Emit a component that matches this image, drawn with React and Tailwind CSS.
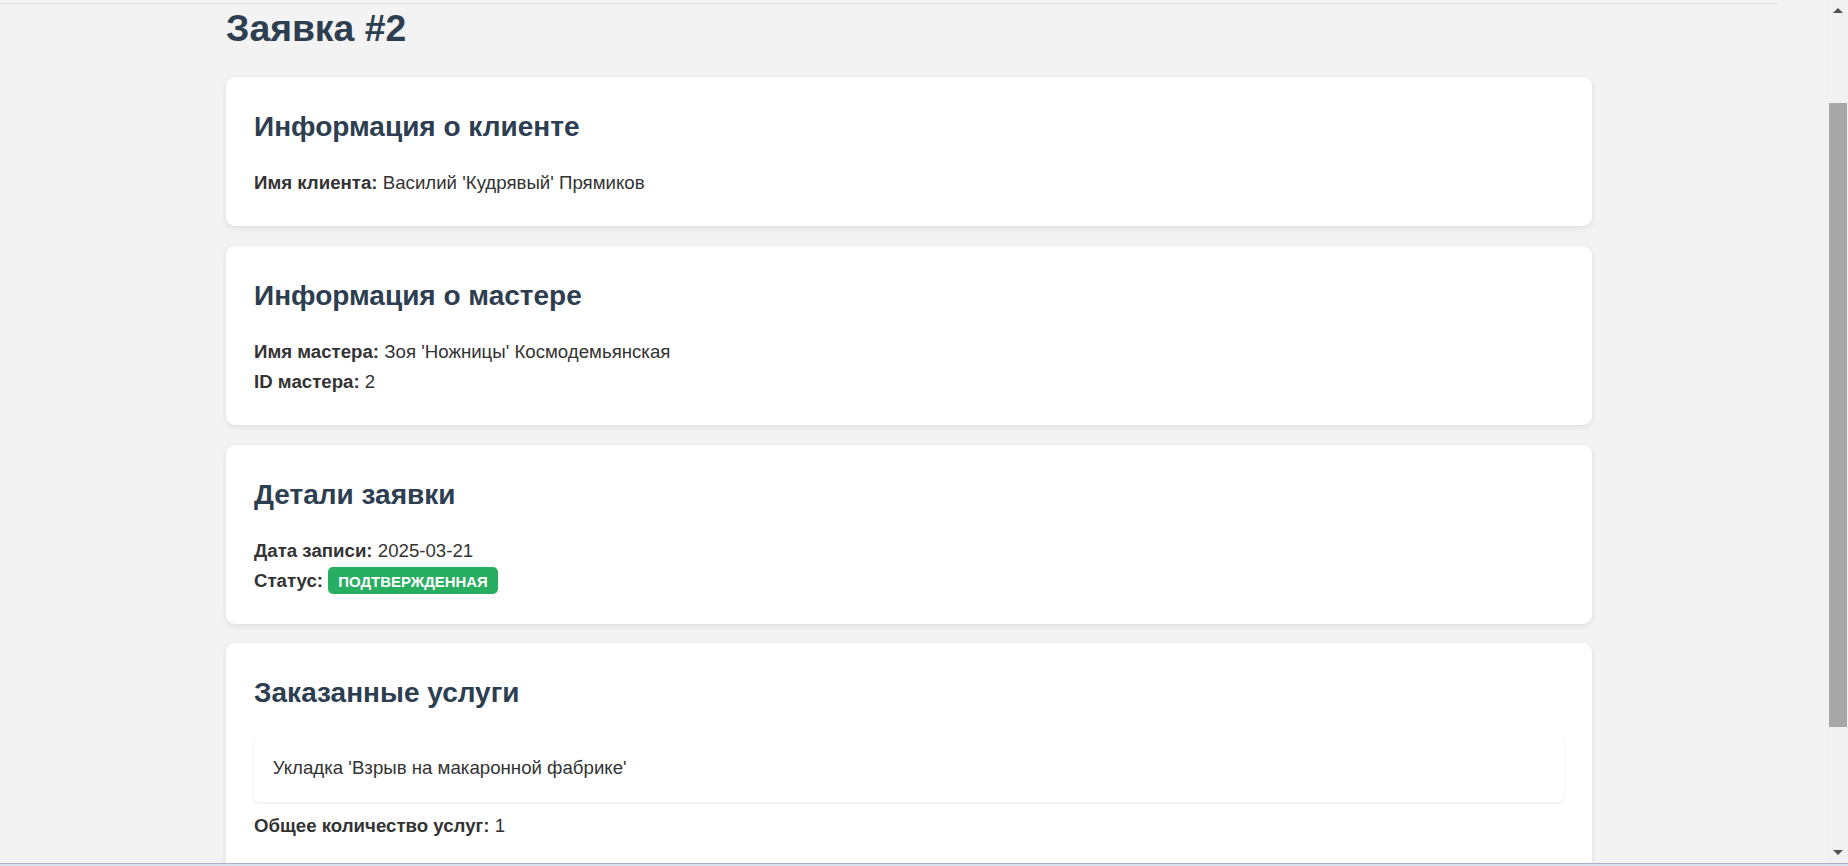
import React from 'react'

const cards = [
  {
    title: 'Информация о клиенте',
    rows: [{ label: 'Имя клиента:', value: "Василий 'Кудрявый' Прямиков" }],
  },
  {
    title: 'Информация о мастере',
    rows: [
      { label: 'Имя мастера:', value: "Зоя 'Ножницы' Космодемьянская" },
      { label: 'ID мастера:', value: '2' },
    ],
  },
]

function Card({ title, children }) {
  return (
    <div className="rounded-[9px] bg-white p-[28px] shadow-[0_2px_6px_rgba(0,0,0,0.09)]">
      <h2 className="mb-[18.67px] text-[28px] font-bold leading-[44.8px] text-[#2c3e50]">{title}</h2>
      {children}
    </div>
  )
}

function Row({ label, children }) {
  return (
    <p className="text-[18.67px] leading-[30px] text-[#333]">
      <strong className="font-bold">{label}</strong> {children}
    </p>
  )
}

function Scrollbar() {
  return (
    <div className="flex w-[21px] shrink-0 flex-col bg-[#f1f1f1]">
      <div className="flex h-[21px] items-center justify-center">
        <div className="h-0 w-0 border-x-[5px] border-b-[5px] border-x-transparent border-b-[#505050]" />
      </div>
      <div className="ml-[2px] mr-[1px] mt-[82px] h-[624px] bg-[#a8a8a8]" />
      <div className="flex-1" />
      <div className="flex h-[21px] items-center justify-center">
        <div className="h-0 w-0 border-x-[5px] border-t-[5px] border-x-transparent border-t-[#505050]" />
      </div>
    </div>
  )
}

export default function App() {
  return (
    <div className="flex h-[866px] w-full flex-col overflow-hidden bg-[#f3f3f3] font-['Liberation_Sans',Arial,sans-serif]">
      <div className="flex h-[863px] overflow-hidden">
        <div className="flex-1 overflow-hidden">
          <div className="h-[3px]" />
          <div className="h-px w-[1778px] bg-[#e0e0e0]" />
          <div className="ml-[226px] w-[1366px]">
            <h1 className="mb-[27px] mt-[2px] text-[37.33px] font-bold leading-[44px] text-[#2c3e50]">Заявка #2</h1>
            <div className="flex flex-col gap-[19.3px]">
              {cards.map((card) => (
                <Card key={card.title} title={card.title}>
                  {card.rows.map((r) => (
                    <Row key={r.label} label={r.label}>{r.value}</Row>
                  ))}
                </Card>
              ))}
              <Card title="Детали заявки">
                <Row label="Дата записи:">2025-03-21</Row>
                <Row label="Статус:">
                  <span className="rounded-[5px] bg-[#27ae60] px-[10px] pb-[4.5px] pt-[5.5px] text-[14.93px] font-bold uppercase leading-normal text-white">
                    Подтвержденная
                  </span>
                </Row>
              </Card>
              <Card title="Заказанные услуги">
                <div className="mb-[9.33px] rounded-[5px] bg-white p-[18.67px] shadow-[0_1px_3px_rgba(0,0,0,0.09)]">
                  <p className="text-[18.67px] leading-[30px] text-[#333]">Укладка 'Взрыв на макаронной фабрике'</p>
                </div>
                <Row label="Общее количество услуг:">1</Row>
              </Card>
            </div>
          </div>
        </div>
        <Scrollbar />
      </div>
      <div className="h-[3px] shrink-0 border-t border-[#a9b3c4] bg-[#d9e1ee]" />
    </div>
  )
}
